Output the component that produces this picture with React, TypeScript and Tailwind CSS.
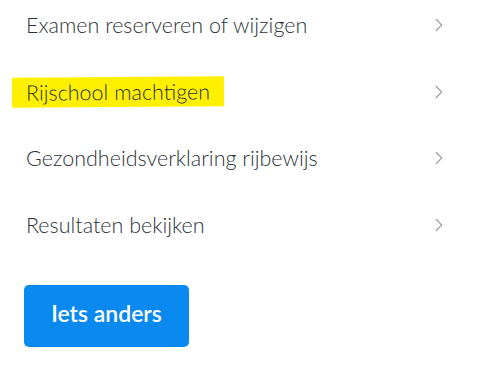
import { ChevronRight } from 'lucide-react'

const items = [
  { label: 'Examen reserveren of wijzigen' },
  { label: 'Rijschool machtigen', marked: true },
  { label: 'Gezondheidsverklaring rijbewijs' },
  { label: 'Resultaten bekijken' },
]

export default function App() {
  return (
    <div className="w-[487px] h-[365px] bg-white px-[26px] pt-[10px] font-['Lato','Noto_Sans',sans-serif] text-[#2c3437]">
      <ul className="flex flex-col gap-[36.5px]">
        {items.map((item) => (
          <li key={item.label} className="flex items-center justify-between h-[30px] pr-[11px]">
            {item.marked ? (
              <span className="-ml-[14px] pl-[14px] pr-[14px] bg-[#fff000] leading-[30px] text-[21.5px] font-light -rotate-[0.4deg]">
                {item.label}
              </span>
            ) : (
              <span className="leading-[30px] text-[21.5px] font-light">{item.label}</span>
            )}
            <ChevronRight className="w-[22px] h-[22px] text-[#a0a0a0]" strokeWidth={1.3} />
          </li>
        ))}
      </ul>
      <button className="mt-[45.5px] -ml-[2px] w-[165px] h-[62px] pb-[6px] rounded-[5px] bg-[#0a8af0] text-white text-[23px] font-semibold">
        Iets anders
      </button>
    </div>
  )
}
